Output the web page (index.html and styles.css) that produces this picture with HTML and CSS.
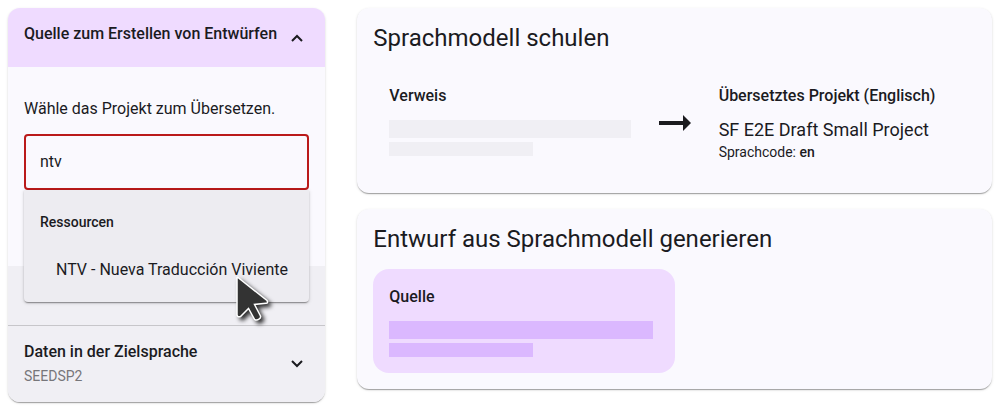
FILE: index.html
```html
<!DOCTYPE html>
<html lang="de">
<head>
<meta charset="utf-8">
<meta name="viewport" content="width=device-width, initial-scale=1">
<title>Quellen konfigurieren</title>
<link rel="stylesheet" href="styles.css">
</head>
<body>
<main class="layout">
  <section class="stepper">
    <button class="step step-active" type="button" aria-expanded="true">
      <span class="step-title">Quelle zum Erstellen von Entwürfen</span>
      <svg class="chevron" viewBox="0 0 12 8" aria-hidden="true"><path d="M1 7 6 2 11 7"/></svg>
    </button>
    <div class="step-body">
      <label class="prompt" for="project">Wähle das Projekt zum Übersetzen.</label>
      <div class="picker">
        <input class="field" id="project" type="text" value="ntv" autocomplete="off">
        <div class="menu" role="listbox" aria-label="Ressourcen">
          <div class="menu-group">Ressourcen</div>
          <div class="menu-option" role="option" aria-selected="false">NTV - Nueva Traducción Viviente</div>
          <svg class="cursor" viewBox="0 0 44 54" aria-hidden="true"><path d="M5 4.500Q5 2.500 6.600 4L35 26.500Q36.500 29 34 29.300L22.500 30.500 28.500 42Q29 44 27 45.200 24.500 46.800 22.500 45.300L16.500 34.500 8.500 42.500Q5.500 43.500 5 41Z"/></svg>
        </div>
      </div>
    </div>
    <div class="step-spacer"></div>
    <button class="step step-next" type="button" aria-expanded="false">
      <span class="step-text">
        <span class="step-title">Daten in der Zielsprache</span>
        <span class="step-note">SEEDSP2</span>
      </span>
      <svg class="chevron" viewBox="0 0 12 8" aria-hidden="true"><path d="M1 1 6 6 11 1"/></svg>
    </button>
  </section>
  <div class="overview">
    <section class="card">
      <h2 class="card-title">Sprachmodell schulen</h2>
      <div class="training">
        <div class="project">
          <h3 class="project-title">Verweis</h3>
          <div class="bar bar-long"></div>
          <div class="bar bar-short"></div>
        </div>
        <svg class="arrow" viewBox="0 0 34 16" aria-hidden="true"><path d="M1 6H25V0L33 8 25 16V10H1Z"/></svg>
        <div class="project">
          <h3 class="project-title">Übersetztes Projekt (Englisch)</h3>
          <div class="project-name">SF E2E Draft Small Project</div>
          <div class="project-code">Sprachcode: <strong>en</strong></div>
        </div>
      </div>
    </section>
    <section class="card">
      <h2 class="card-title">Entwurf aus Sprachmodell generieren</h2>
      <div class="project project-active">
        <h3 class="project-title">Quelle</h3>
        <div class="bar bar-long"></div>
        <div class="bar bar-short"></div>
      </div>
    </section>
  </div>
</main>
</body>
</html>
```
FILE: styles.css
```css
* {
  box-sizing: border-box;
}

body {
  min-height: 100vh;
  margin: 0;
  padding: 8px;
  background: #fff;
  color: #1b1b1f;
  font-family: Roboto, "Liberation Sans", sans-serif;
  font-size: 16px;
  line-height: 24px;
}

h2,
h3 {
  margin: 0;
}

.layout {
  display: grid;
  grid-template-columns: minmax(0, 1fr) minmax(0, 2fr);
  align-items: start;
  gap: 32px;
}

.stepper,
.card {
  border-radius: 12px;
  background: #faf9fe;
  box-shadow: 0 2px 1px -1px rgba(0, 0, 0, 0.2), 0 1px 1px rgba(0, 0, 0, 0.14), 0 1px 3px rgba(0, 0, 0, 0.12);
}

.step {
  display: flex;
  align-items: center;
  justify-content: space-between;
  width: 100%;
  padding: 14px 22px 14px 16px;
  border: 0;
  background: #f0eff4;
  color: inherit;
  font: inherit;
  text-align: left;
}

.step-active {
  height: 59px;
  padding-top: 6px;
  border-radius: 12px 12px 0 0;
  background: #efdbff;
}

.step-active .chevron {
  margin-top: 8px;
}

.step-next {
  border-top: 1px solid #c7c6ca;
  border-radius: 0 0 12px 12px;
}

.step-title {
  font-weight: 500;
}

.step-text {
  display: flex;
  flex-direction: column;
}

.step-note {
  color: #77767a;
  font-size: 14px;
}

.chevron {
  flex: none;
  width: 12px;
  height: 8px;
  fill: none;
  stroke: #1b1b1f;
  stroke-width: 2;
}

.step-body {
  padding: 30px 16px 76px;
}

.step-spacer {
  height: 59px;
  background: #f0eff4;
}

.prompt {
  display: block;
  margin-bottom: 13px;
}

.picker {
  position: relative;
}

.field {
  display: block;
  width: 100%;
  height: 56px;
  padding: 0 14px 2px;
  border: 2px solid #ba1a1a;
  border-radius: 4px;
  outline: 0;
  background: transparent;
  color: #1b1b1f;
  font: inherit;
}

.menu {
  position: absolute;
  z-index: 1;
  top: 100%;
  left: 0;
  right: 0;
  padding: 8px 0;
  border-radius: 0 0 4px 4px;
  background: #edecf1;
  box-shadow: 0 2px 1px -1px rgba(0, 0, 0, 0.25), 0 1px 2px rgba(0, 0, 0, 0.2), 0 1px 4px rgba(0, 0, 0, 0.12);
}

.menu-group,
.menu-option {
  padding: 0 16px;
  line-height: 48px;
  white-space: nowrap;
}

.menu-group {
  font-size: 14px;
  font-weight: 500;
}

.menu-option {
  padding-left: 32px;
}

.cursor {
  position: absolute;
  top: 84px;
  left: 208px;
  width: 44px;
  height: 54px;
  fill: #333;
  stroke: #fff;
  stroke-width: 1.500;
  filter: drop-shadow(3px 3px 2px rgba(0, 0, 0, 0.8));
}

.overview {
  display: grid;
  gap: 16px;
}

.card {
  padding: 16px;
}

.card-title {
  margin-bottom: 16px;
  font-size: 24px;
  font-weight: 400;
  line-height: 28px;
}

.training {
  display: grid;
  grid-template-columns: minmax(0, 1fr) 34px minmax(0, 1fr);
  align-items: center;
  column-gap: 11px;
}

.arrow {
  width: 34px;
  height: 16px;
  fill: #1b1b1f;
}

.project {
  align-self: start;
  padding: 16px;
}

.training .project {
  padding-bottom: 15px;
}

.project-active {
  width: 50%;
  border-radius: 16px;
  background: #efdbff;
}

.project-title {
  margin-bottom: 12px;
  font-size: 16px;
  font-weight: 500;
  line-height: 24px;
}

.project-name {
  margin-top: -2px;
  font-size: 18px;
}

.project-code {
  font-size: 14px;
  line-height: 20px;
}

.project-code strong {
  font-weight: 500;
}

.bar {
  background: #f0eff4;
}

.bar-long {
  max-width: 264px;
  height: 18px;
  margin-bottom: 4px;
}

.bar-short {
  max-width: 144px;
  height: 14px;
}

.project-active .bar {
  background: #dbb8ff;
}
```
